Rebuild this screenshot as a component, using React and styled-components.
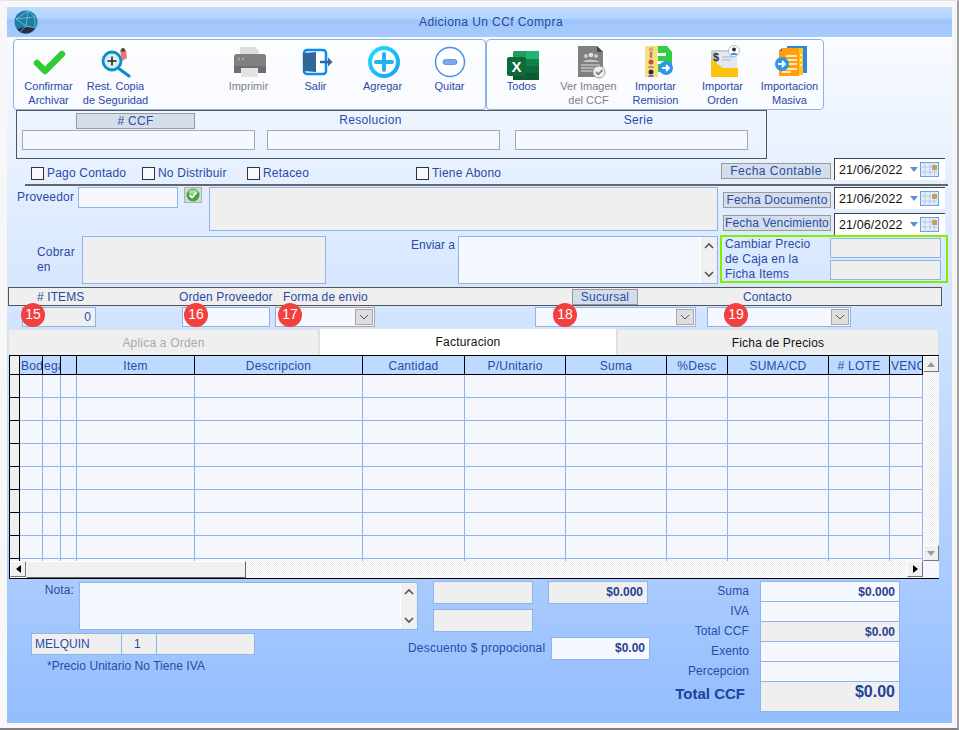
import React from 'react';
import styled, { createGlobalStyle } from 'styled-components';

const GlobalStyle = createGlobalStyle`
  html, body {
    margin: 0;
    padding: 0;
    background: #f7f7f7;
  }
  * {
    box-sizing: border-box;
  }
`;

const BLUE_LINE = '#8fb4ea';
const INK = '#2b4aa5';

const Frame = styled.div`
  width: 959px;
  height: 730px;
  padding: 7px 0 0 7px;
  border-top: 1px solid #e4e4e4;
  border-bottom: 2px solid #808080;
  border-right: 2px solid #a0a0a0;
  background: #f7f7f7;
  font-family: 'Liberation Sans', Arial, sans-serif;
  font-size: 12px;
  color: ${INK};
  overflow: hidden;
`;

const Form = styled.div`
  width: 945px;
  height: 716px;
  margin-top: -1px;
  background: linear-gradient(#f9fbff 30px, #d0e3ff 320px, #93bdfe);
`;

const TitleBar = styled.div`
  height: 30px;
  display: flex;
  align-items: center;
  padding-left: 7px;
  background: linear-gradient(#bedbff 0, #b5d5fe 11px, #9fc5fb 13px, #a6cafb);
`;

const Title = styled.div`
  flex: 1;
  padding-right: 8px;
  text-align: center;
  font-size: 12px;
  letter-spacing: 0.42px;
  color: #1f4aa0;
`;

const Toolbar = styled.div`
  display: flex;
  margin: 2px 0 0 6px;
`;

const ToolGroup = styled.div`
  display: flex;
  width: ${(p) => p.$width}px;
  height: 71px;
  padding-left: ${(p) => p.$pad}px;
  border: 1px solid #8fb2e6;
  border-radius: 4px;
  background: rgba(255, 255, 255, 0.55);
`;

const ToolItem = styled.div`
  width: 67px;
  padding-top: 5px;
  text-align: center;
  font-size: 11px;
  line-height: 14px;
  color: ${(p) => (p.$off ? '#808080' : INK)};
  white-space: nowrap;
  svg {
    display: block;
    margin: 0 auto -1px;
  }
`;

const ToolGap = styled.div`
  width: 66px;
`;

const CcfBox = styled.div`
  display: grid;
  grid-template-columns: 245px 248px 233px;
  width: 751px;
  height: 49px;
  margin-left: 9px;
  padding: 2px 0 0 5px;
  border: 1px solid #555;
`;

const CcfColumn = styled.div`
  display: flex;
  flex-direction: column;
  align-items: ${(p) => (p.$first ? 'flex-start' : 'stretch')};
`;

const CcfTitle = styled.div`
  height: 16px;
  line-height: 15px;
  text-align: center;
  letter-spacing: 0.3px;
  width: ${(p) => (p.$boxed ? '119px' : '233px')};
  margin-left: ${(p) => (p.$boxed ? '54px' : '0')};
  padding-left: ${(p) => p.$padLeft || 0}px;
  padding-right: ${(p) => p.$padRight || 0}px;
  ${(p) => p.$boxed && `
    background: #d4deea;
    border: 1px solid #9a9a9a;
  `}
`;

const PlainInput = styled.div`
  width: 233px;
  height: 20px;
  margin-top: 1px;
  background: #f5f8ff;
  border: 1px solid #a8a8a8;
`;

const CheckRow = styled.div`
  display: flex;
  align-items: flex-start;
  width: 923px;
  height: 27px;
  margin-left: 18px;
  padding-left: 6px;
  padding-right: 3px;
  border-bottom: 2px solid #666;
`;

const CheckItem = styled.label`
  display: flex;
  align-items: center;
  width: ${(p) => p.$width}px;
  margin-top: 7px;
  letter-spacing: 0.2px;
`;

const CheckBoxMark = styled.span`
  width: 13px;
  height: 13px;
  margin-right: 3px;
  border: 1px solid #333;
  background: #f7f9ff;
`;

const DateGroup = styled.div`
  display: flex;
  margin-left: auto;
  margin-top: -1px;
  align-items: flex-start;
`;

const FechaTag = styled.div`
  width: ${(p) => p.$width || 108}px;
  height: 16px;
  margin: ${(p) => p.$top || 5}px 3px 0 0;
  background: #d4deea;
  border: 1px solid #9a9a9a;
  line-height: 15px;
  text-align: center;
  letter-spacing: ${(p) => p.$track}px;
  white-space: nowrap;
`;

const DateField = styled.div`
  display: flex;
  align-items: center;
  width: 111px;
  height: 22px;
  padding-left: 4px;
  background: #fff;
  border-top: 1px solid #444;
  border-left: 1px solid #444;
  color: #111;
  font-size: 12.5px;
  letter-spacing: 0.1px;
  svg:last-child {
    margin-left: 2px;
  }
`;

const DateText = styled.span`
  width: 71px;
`;

const SupplierSection = styled.div`
  display: flex;
  height: 97px;
  margin-top: 1px;
`;

const SupplierLeft = styled.div`
  width: 713px;
`;

const SupplierRow = styled.div`
  display: flex;
  padding-left: ${(p) => p.$pad}px;
  margin-top: ${(p) => p.$top || 0}px;
  height: ${(p) => p.$height}px;
`;

const SideLabel = styled.div`
  width: ${(p) => p.$width}px;
  margin-left: ${(p) => p.$left || 0}px;
  padding-top: ${(p) => p.$top || 0}px;
  line-height: 15px;
  letter-spacing: ${(p) => (p.$tight ? 0 : 0.2)}px;
`;

const Field = styled.div`
  position: relative;
  flex: none;
  width: ${(p) => p.$width}px;
  height: ${(p) => p.$height || 20}px;
  margin-left: ${(p) => p.$left || 0}px;
  background: ${(p) => (p.$grey ? '#efefef' : '#f5f8ff')};
  border: 1px solid ${(p) => p.$line || BLUE_LINE};
  line-height: ${(p) => (p.$height || 20) - 2}px;
  text-align: ${(p) => p.$align || 'left'};
  font-weight: ${(p) => (p.$bold ? 'bold' : 'normal')};
  padding: 0 4px;
  color: ${(p) => (p.$bold ? '#2a3f8f' : INK)};
`;

const ScrollBarV = styled.div`
  position: absolute;
  right: 0;
  top: 0;
  bottom: 0;
  width: 17px;
  display: flex;
  flex-direction: column;
  justify-content: space-between;
  align-items: center;
  padding: 5px 0;
  background: #f0f0f0;
  border-left: 1px solid #fff;
`;

const OkButton = styled.div`
  width: 18px;
  height: 16px;
  margin-left: 6px;
  background: #d8d8d8;
  border: 1px solid #b0b0b0;
  svg {
    display: block;
    margin: 0 auto;
  }
`;

const SupplierRight = styled.div`
  width: 228px;
`;

const DateRow = styled.div`
  display: flex;
  height: 22px;
  margin-top: ${(p) => p.$top || 0}px;
  padding-left: 3px;
`;

const PriceBox = styled.div`
  display: flex;
  height: 48px;
  width: 228px;
  border: 2px solid #80f000;
  padding-left: 3px;
`;

const PriceText = styled.div`
  width: 105px;
  line-height: 15px;
  letter-spacing: 0.2px;
  white-space: nowrap;
`;

const PriceFields = styled.div`
  display: flex;
  flex-direction: column;
  gap: 2px;
  padding-top: 1px;
`;

const Strip = styled.div`
  display: flex;
  align-items: center;
  width: 934px;
  height: 19px;
  margin: 3px 0 0 1px;
  padding-left: 28px;
  background: #efefef;
  border: 1px solid #555;
`;

const StripLabel = styled.div`
  width: ${(p) => p.$width}px;
  flex: none;
  letter-spacing: 0.1px;
  white-space: nowrap;
`;

const StripButton = styled.div`
  width: 66px;
  height: 16px;
  margin-right: 105px;
  background: #d4deea;
  border: 1px solid #9a9a9a;
  line-height: 15px;
  text-align: center;
  letter-spacing: 0.2px;
`;

const FieldRow = styled.div`
  display: flex;
  margin: 1px 0 0 15px;
`;

const Badge = styled.div`
  position: absolute;
  top: -5px;
  left: ${(p) => p.$left}px;
  width: 24px;
  height: 24px;
  border-radius: 50%;
  background: #f2403f;
  color: #fff;
  font-size: 14px;
  line-height: 23px;
  text-align: center;
  z-index: 2;
`;

const ComboArrow = styled.div`
  position: absolute;
  top: 1px;
  right: 1px;
  width: 18px;
  height: 16px;
  display: flex;
  align-items: center;
  justify-content: center;
  background: #dedede;
  border: 1px solid #a8a8a8;
`;

const TabBar = styled.div`
  display: flex;
  align-items: flex-end;
  height: 26px;
  margin: 2px 0 0 1px;
`;

const Tab = styled.div`
  width: ${(p) => p.$width}px;
  height: ${(p) => (p.$active ? '27px' : '26px')};
  margin-top: ${(p) => (p.$active ? '-1px' : '0')};
  background: ${(p) => (p.$active ? '#fff' : '#efefef')};
  border-top: 1px solid #e2e2e2;
  border-left: 1px solid #e2e2e2;
  border-right: 1px solid #dcdcdc;
  color: ${(p) => (p.$off ? '#aaa' : '#111')};
  line-height: 26px;
  text-align: center;
  letter-spacing: 0.2px;
`;

const GridShell = styled.div`
  display: grid;
  grid-template-columns: 913px 16px;
  grid-template-rows: 205px 17px;
  width: 930px;
  margin-left: 2px;
  background: #f4f7fe;
  border-top: 1px solid #000;
  border-left: 1px solid #000;
  border-bottom: 1px solid #000;
`;

const TableClip = styled.div`
  overflow: hidden;
`;

const DataTable = styled.table`
  width: 913px;
  table-layout: fixed;
  border-collapse: separate;
  border-spacing: 0;
  font-size: 12px;
`;

const HeadCell = styled.th`
  height: 19px;
  padding: 1px ${(p) => (p.$left ? '1px' : '0')} 0;
  background: #bddaff;
  border-right: 1px solid #000;
  border-bottom: 1px solid #000;
  color: ${INK};
  font-weight: normal;
  letter-spacing: 0.25px;
  text-align: ${(p) => (p.$left ? 'left' : 'center')};
  white-space: nowrap;
  overflow: hidden;
`;

const CornerCell = styled.th`
  height: 19px;
  padding: 0;
  background: #efefef;
  border-right: 1px solid #000;
  border-bottom: 1px solid #000;
`;

const RowHead = styled.td`
  height: 23px;
  padding: 0;
  background: #efefef;
  border-right: 1px solid #000;
  border-bottom: 1px solid #000;
`;

const DataCell = styled.td`
  height: 23px;
  padding: 0;
  border-right: 1px solid ${BLUE_LINE};
  border-bottom: 1px solid ${BLUE_LINE};
`;

const Dither = styled.div`
  display: flex;
  flex-direction: ${(p) => (p.$vertical ? 'column' : 'row')};
  justify-content: space-between;
  background: repeating-conic-gradient(#ececec 0 25%, #fff 0 50%) 0 0 / 2px 2px;
`;

const ScrollButton = styled.div`
  flex: none;
  width: 16px;
  height: 16px;
  display: flex;
  align-items: center;
  justify-content: center;
  background: #f0f0f0;
  border-top: 1px solid #fff;
  border-left: 1px solid #fff;
  border-right: 1px solid #777;
  border-bottom: 1px solid #777;
`;

const ScrollThumb = styled.div`
  flex: none;
  width: 219px;
  height: 17px;
  margin-left: 1px;
  margin-right: auto;
  background: #f0f0f0;
  border-top: 1px solid #fff;
  border-right: 1px solid #666;
  border-bottom: 1px solid #666;
`;

const Footer = styled.div`
  display: flex;
  margin: 2px 0 0 24px;
`;

const FooterLeft = styled.div`
  width: 625px;
`;

const FooterTop = styled.div`
  display: flex;
  height: 52px;
`;

const NoteLabel = styled.div`
  width: 43px;
  padding-top: 2px;
  text-align: right;
  letter-spacing: 0.1px;
`;

const NoteField = styled(Field)`
  margin-top: 1px;
`;

const NoteColumn = styled.div`
  display: flex;
  flex-direction: column;
  gap: 5px;
  margin-left: 15px;
`;

const FooterBottom = styled.div`
  display: flex;
`;

const UserColumn = styled.div`
  width: 377px;
`;

const UserRow = styled.div`
  display: flex;
`;

const UserCell = styled.div`
  width: ${(p) => p.$width}px;
  height: 22px;
  padding-left: ${(p) => p.$pad || 3}px;
  background: #efefef;
  border: 1px solid ${BLUE_LINE};
  border-left-width: ${(p) => (p.$first ? '1px' : '0')};
  line-height: 20px;
`;

const UserNote = styled.div`
  margin: 4px 0 0 16px;
  letter-spacing: 0.05px;
`;

const DiscountLabel = styled.div`
  width: 143px;
  padding-top: 8px;
  letter-spacing: 0.2px;
  white-space: nowrap;
`;

const DiscountWrap = styled.div`
  padding-top: 4px;
`;

const Totals = styled.div`
  display: grid;
  grid-template-columns: 93px 139px;
  grid-auto-rows: 20px;
  column-gap: 11px;
  align-items: start;
`;

const TotalLabel = styled.div`
  text-align: right;
  line-height: 20px;
  letter-spacing: 0.1px;
  white-space: nowrap;
`;

const GrandLabel = styled.div`
  grid-row: span 2;
  padding: 4px 4px 0 0;
  text-align: right;
  font-size: 15px;
  font-weight: bold;
  color: #1e429c;
  white-space: nowrap;
`;

const TotalBox = styled(Field)`
  width: 140px;
  height: 21px;
  line-height: 20px;
`;

const GrandBox = styled(Field)`
  grid-row: span 2;
  width: 140px;
  height: 31px;
  font-size: 16px;
  line-height: 20px;
  color: #1e429c;
`;

const columns = [
  { title: 'Bod', width: 23, left: true },
  { title: 'ega', width: 18, left: true },
  { title: '', width: 16 },
  { title: 'Item', width: 118 },
  { title: 'Descripcion', width: 168 },
  { title: 'Cantidad', width: 102 },
  { title: 'P/Unitario', width: 101 },
  { title: 'Suma', width: 101 },
  { title: '%Desc', width: 61 },
  { title: 'SUMA/CD', width: 101 },
  { title: '# LOTE', width: 61 },
  { title: 'VENC', width: 33, left: true },
];

const Chevron = ({ up, thin }) => (
  <svg width="10" height="7" viewBox="0 0 10 7">
    <path
      d={up ? 'M1 6L5 2l4 4' : 'M1 1l4 4 4-4'}
      fill="none"
      stroke="#555"
      strokeWidth={thin ? 1 : 1.6}
    />
  </svg>
);

const Tri = ({ dir, color = '#000' }) => {
  const points = {
    up: '0,5 4,0 8,5',
    down: '0,0 8,0 4,5',
    left: '5,0 5,8 0,4',
    right: '0,0 0,8 5,4',
  };
  const box = dir === 'up' || dir === 'down' ? [8, 5] : [5, 8];
  return (
    <svg width={box[0]} height={box[1]} viewBox={`0 0 ${box[0]} ${box[1]}`}>
      <polygon points={points[dir]} fill={color} />
    </svg>
  );
};

const Globe = () => (
  <svg width="24" height="24" viewBox="0 0 24 24">
    <circle cx="12" cy="12" r="11.5" fill="#1c7fa8" />
    <path d="M3 19c5-2 13-3 18-1-2 3-5 5.500-9 5.500S5 22 3 19z" fill="#26324a" />
    <g fill="none" stroke="#9fd2e8" strokeWidth="0.6">
      <path d="M2 9L14 1M2 9l10 7 9 2M14 1l-2 15-6 6M2 9l19-2M14 1l7 6 0 11" />
    </g>
  </svg>
);

const CheckIcon = () => (
  <svg width="40" height="35" viewBox="0 0 40 35">
    <path
      d="M8 18l8 8L33 9"
      fill="none"
      stroke="#33cc33"
      strokeWidth="6.500"
      strokeLinecap="round"
      strokeLinejoin="round"
    />
  </svg>
);

const SearchIcon = () => (
  <svg width="40" height="35" viewBox="0 0 40 35">
    <path d="M24 5h6l1 8-5 3z" fill="#e87878" />
    <circle cx="27" cy="5" r="2" fill="#5a3a3a" />
    <path d="M22 23l11 8" stroke="#0b8ec7" strokeWidth="3.200" strokeLinecap="round" />
    <circle cx="16" cy="16" r="9" fill="#d9edf3" stroke="#0b8ec7" strokeWidth="2.800" />
    <path d="M11.500 16h9M16 11.500v9" stroke="#222" strokeWidth="1.500" />
  </svg>
);

const PrinterIcon = () => (
  <svg width="40" height="35" viewBox="0 0 40 35">
    <path d="M11 2h15l4 4v6H11z" fill="#dcdcdc" />
    <rect x="5" y="9" width="32" height="19" rx="2.500" fill="#808080" />
    <rect x="5" y="21" width="32" height="7" fill="#6e6e6e" />
    <circle cx="10" cy="14" r="1.200" fill="#a8a8a8" />
    <circle cx="14" cy="14" r="1.200" fill="#a8a8a8" />
    <rect x="12" y="23" width="17" height="9" fill="#e4e4e4" />
  </svg>
);

const ExitIcon = () => (
  <svg width="40" height="35" viewBox="0 0 40 35">
    <rect x="8" y="5" width="22" height="24" rx="3" fill="#fff" stroke="#0b8cf2" strokeWidth="2.500" />
    <path d="M7 8l13-1v20l-13-1z" fill="#336699" />
    <path d="M24 17h10" stroke="#336699" strokeWidth="2.500" />
    <path d="M32 12.500l4.500 4.500-4.500 4.500z" fill="#336699" />
  </svg>
);

const AddIcon = () => (
  <svg width="40" height="35" viewBox="0 0 40 35">
    <defs>
      <linearGradient id="addRing" x1="0" y1="0" x2="1" y2="1">
        <stop offset="0" stopColor="#20e0ff" />
        <stop offset="1" stopColor="#1c9cf2" />
      </linearGradient>
    </defs>
    <circle cx="21" cy="17" r="14" fill="#fff" stroke="url(#addRing)" strokeWidth="4" />
    <path d="M21 9v16M13 17h16" stroke="#22b4f0" strokeWidth="4" strokeLinecap="round" />
  </svg>
);

const RemoveIcon = () => (
  <svg width="40" height="35" viewBox="0 0 40 35">
    <circle cx="20" cy="17" r="14.500" fill="#fff" stroke="#4a90f0" strokeWidth="1.500" />
    <rect x="13" y="14.500" width="14" height="5" rx="2.500" fill="#7fa9ee" stroke="#4a86e8" strokeWidth="0.800" />
  </svg>
);

const ExcelIcon = () => (
  <svg width="40" height="35" viewBox="0 0 40 35">
    <rect x="11" y="6" width="26" height="29" rx="1.500" fill="#1f9d5f" />
    <rect x="24" y="6" width="13" height="8" fill="#20b573" />
    <rect x="24" y="14" width="13" height="7" fill="#12804a" />
    <rect x="24" y="21" width="13" height="7" fill="#0f6b3d" />
    <rect x="11" y="28" width="26" height="7" fill="#0c5a33" />
    <rect x="5" y="12" width="19" height="19" rx="2" fill="#0d6a3a" />
    <text x="14.500" y="27" fontFamily="Liberation Sans" fontSize="15" fontWeight="bold" fill="#fff" textAnchor="middle">X</text>
  </svg>
);

const DocIcon = () => (
  <svg width="40" height="35" viewBox="0 0 40 35">
    <path d="M9 1h19l6 6v25H9z" fill="#808080" />
    <path d="M28 1l6 6h-6z" fill="#444" />
    <circle cx="17" cy="11" r="2" fill="#c8c8c8" />
    <circle cx="22" cy="10" r="2.300" fill="#e4e4e4" />
    <circle cx="27" cy="11" r="2" fill="#c8c8c8" />
    <path d="M14 17c1-3 14-3 16 0z" fill="#c8c8c8" />
    <path d="M12 20h19M12 23h17M12 26h13" stroke="#e0e0e0" strokeWidth="1.200" />
    <circle cx="30" cy="27" r="6" fill="#f0f0f0" stroke="#9a9a9a" />
    <path d="M27 27l2.300 2.300L33.500 25" fill="none" stroke="#808080" strokeWidth="1.800" />
  </svg>
);

const ArrowBadge = ({ cx, cy }) => (
  <g>
    <circle cx={cx} cy={cy} r="7" fill="#2f96f0" />
    <path d={`M${cx - 4} ${cy}h7M${cx} ${cy - 3}l3 3-3 3`} fill="none" stroke="#fff" strokeWidth="1.800" />
  </g>
);

const RemisionIcon = () => (
  <svg width="40" height="35" viewBox="0 0 40 35">
    <path d="M21 1h10l5 6v20H21z" fill="#33cc44" />
    <rect x="9" y="1" width="13" height="31" fill="#f2e27a" />
    <path d="M21 8h9v3h-9zM21 16h7v3h-7z" fill="#fff" />
    <circle cx="15" cy="4.500" r="2.300" fill="#d9a58a" />
    <path d="M15 7v6" stroke="#c87070" strokeWidth="2.500" />
    <circle cx="15" cy="17" r="2.500" fill="#c9503a" />
    <path d="M12 23c0-3 6-3 6 0z" fill="#d88060" />
    <circle cx="15" cy="27" r="2.500" fill="#3a2a40" />
    <path d="M12 32c0-3 6-3 6 0z" fill="#8a60c0" />
    <ArrowBadge cx={30} cy={23} />
  </svg>
);

const OrdenIcon = () => (
  <svg width="40" height="35" viewBox="0 0 40 35">
    <rect x="8" y="5" width="26" height="18" fill="#c7ced9" />
    <rect x="14" y="7" width="20" height="16" fill="#e3e9f2" />
    <path d="M19 12h12M19 15h9" stroke="#a9b4c4" strokeWidth="1.200" />
    <path d="M8 14l12 9h15v9H8z" fill="#ffc20e" />
    <text x="13" y="16" fontFamily="Liberation Sans" fontSize="11" fontWeight="bold" fill="#333" textAnchor="middle">$</text>
    <circle cx="31" cy="6" r="5.500" fill="#fff" stroke="#bbb" />
    <circle cx="31" cy="4.500" r="2" fill="#3a2f2a" />
    <path d="M27.500 10c0-3 7-3 7 0z" fill="#2f96f0" />
  </svg>
);

const MasivaIcon = () => (
  <svg width="40" height="35" viewBox="0 0 40 35">
    <rect x="17" y="1" width="20" height="27" fill="#2f86e0" />
    <rect x="12" y="3" width="21" height="27" fill="#ffc21a" />
    <path d="M9 6l4-3h16v28H9z" fill="#ff9f0a" />
    <path d="M9 6l3-3v3z" fill="#7e57c2" />
    <path d="M16 11h11M16 15h11M16 19h11M12 24h15M12 27h9" stroke="#fff" strokeWidth="1.300" />
    <path d="M30 10h2M30 15h2M30 20h2" stroke="#fff" strokeWidth="1.300" />
    <ArrowBadge cx={12} cy={19} />
  </svg>
);

const OkIcon = () => (
  <svg width="16" height="14" viewBox="0 0 16 14">
    <circle cx="8" cy="7" r="6.500" fill="#3fa83f" />
    <ellipse cx="8" cy="4" rx="4.500" ry="2.500" fill="#9edc9e" />
    <path d="M4.500 7l2.500 2.500L11.500 4.500" fill="none" stroke="#fff" strokeWidth="1.800" />
  </svg>
);

const CalendarIcon = () => (
  <svg width="20" height="16" viewBox="0 0 20 16">
    <rect x="0.500" y="0.500" width="18" height="14" fill="#e6eefb" stroke="#6a9be0" />
    <path d="M0 5h19M0 10h19M5 0v15M10 0v15M14.500 0v15" stroke="#a9c4ec" strokeWidth="0.800" />
    <rect x="12" y="3" width="5" height="5" fill="#c4a25e" />
  </svg>
);

const DateBox = () => (
  <DateField>
    <DateText>21/06/2022</DateText>
    <Tri dir="down" color="#5b8fd8" />
    <CalendarIcon />
  </DateField>
);

const Check = ({ width, children }) => (
  <CheckItem $width={width}>
    <CheckBoxMark />
    {children}
  </CheckItem>
);

const tools = [
  [<CheckIcon />, 'Confirmar', 'Archivar'],
  [<SearchIcon />, 'Rest. Copia', 'de Seguridad'],
  null,
  [<PrinterIcon />, 'Imprimir', null, true],
  [<ExitIcon />, 'Salir'],
  [<AddIcon />, 'Agregar'],
  [<RemoveIcon />, 'Quitar'],
];

const tools2 = [
  [<ExcelIcon />, 'Todos'],
  [<DocIcon />, 'Ver Imagen', 'del CCF', true],
  [<RemisionIcon />, 'Importar', 'Remision'],
  [<OrdenIcon />, 'Importar', 'Orden'],
  [<MasivaIcon />, 'Importacion', 'Masiva'],
];

const renderTool = (tool, i) =>
  tool ? (
    <ToolItem key={i} $off={tool[3]}>
      {tool[0]}
      <div>{tool[1]}</div>
      {tool[2] && <div>{tool[2]}</div>}
    </ToolItem>
  ) : (
    <ToolGap key={i} />
  );

export default function App() {
  return (
    <Frame>
      <GlobalStyle />
      <Form>
        <TitleBar>
          <Globe />
          <Title>Adiciona Un CCf Compra</Title>
        </TitleBar>

        <Toolbar>
          <ToolGroup $width={473} $pad={1}>
            {tools.map(renderTool)}
          </ToolGroup>
          <ToolGroup $width={338} $pad={1}>
            {tools2.map(renderTool)}
          </ToolGroup>
        </Toolbar>

        <CcfBox>
          <CcfColumn $first>
            <CcfTitle $boxed># CCF</CcfTitle>
            <PlainInput />
          </CcfColumn>
          <CcfColumn>
            <CcfTitle $padRight={26}>Resolucion</CcfTitle>
            <PlainInput />
          </CcfColumn>
          <CcfColumn>
            <CcfTitle $padLeft={14}>Serie</CcfTitle>
            <PlainInput />
          </CcfColumn>
        </CcfBox>

        <CheckRow>
          <Check width={111}>Pago Contado</Check>
          <Check width={105}>No Distribuir</Check>
          <Check width={169}>Retaceo</Check>
          <Check width={150}>Tiene Abono</Check>
          <DateGroup>
            <FechaTag $width={110} $track={0.5}>Fecha Contable</FechaTag>
            <DateBox />
          </DateGroup>
        </CheckRow>

        <SupplierSection>
          <SupplierLeft>
            <SupplierRow $pad={10} $height={44}>
              <SideLabel $width={61} $top={3}>Proveedor</SideLabel>
              <Field $width={100} $height={21} />
              <OkButton><OkIcon /></OkButton>
              <Field $width={509} $height={44} $left={7} $grey />
            </SupplierRow>
            <SupplierRow $pad={30} $height={48} $top={5}>
              <SideLabel $width={45} $top={9}>Cobrar en</SideLabel>
              <Field $width={244} $height={48} $grey />
              <SideLabel $width={47} $left={85} $top={2} $tight>Enviar a</SideLabel>
              <Field $width={260} $height={48}>
                <ScrollBarV>
                  <Chevron up />
                  <Chevron />
                </ScrollBarV>
              </Field>
            </SupplierRow>
          </SupplierLeft>
          <SupplierRight>
            <DateRow>
              <FechaTag $track={0.2}>Fecha Documento</FechaTag>
              <DateBox />
            </DateRow>
            <DateRow $top={4}>
              <FechaTag $top={2} $track={0.1}>Fecha Vencimiento</FechaTag>
              <DateBox />
            </DateRow>
            <PriceBox>
              <PriceText>
                Cambiar Precio
                <br />
                de Caja en la
                <br />
                Ficha Items
              </PriceText>
              <PriceFields>
                <Field $width={111} $height={20} $grey />
                <Field $width={111} $height={20} $grey />
              </PriceFields>
            </PriceBox>
          </SupplierRight>
        </SupplierSection>

        <Strip>
          <StripLabel $width={142}># ITEMS</StripLabel>
          <StripLabel $width={104}>Orden Proveedor</StripLabel>
          <StripLabel $width={289}>Forma de envio</StripLabel>
          <StripButton>Sucursal</StripButton>
          <StripLabel $width={60}>Contacto</StripLabel>
        </Strip>

        <FieldRow>
          <Field $width={74} $align="right" $grey>
            0
            <Badge $left={-2}>15</Badge>
          </Field>
          <Field $width={88} $left={86}>
            <Badge $left={1}>16</Badge>
          </Field>
          <Field $width={100} $left={5} $line="#a8a8a8">
            <Badge $left={2}>17</Badge>
            <ComboArrow><Chevron thin /></ComboArrow>
          </Field>
          <Field $width={161} $left={160}>
            <Badge $left={17}>18</Badge>
            <ComboArrow><Chevron thin /></ComboArrow>
          </Field>
          <Field $width={144} $left={11}>
            <Badge $left={16}>19</Badge>
            <ComboArrow><Chevron thin /></ComboArrow>
          </Field>
        </FieldRow>

        <TabBar>
          <Tab $width={311} $off>Aplica a Orden</Tab>
          <Tab $width={298} $active>Facturacion</Tab>
          <Tab $width={322}>Ficha de Precios</Tab>
        </TabBar>

        <GridShell>
          <TableClip>
            <DataTable>
              <colgroup>
                <col style={{ width: 10 }} />
                {columns.map((c, i) => (
                  <col key={i} style={{ width: c.width }} />
                ))}
              </colgroup>
              <thead>
                <tr>
                  <CornerCell />
                  {columns.map((c, i) => (
                    <HeadCell key={i} $left={c.left}>{c.title}</HeadCell>
                  ))}
                </tr>
              </thead>
              <tbody>
                {Array.from({ length: 9 }).map((_, r) => (
                  <tr key={r}>
                    <RowHead />
                    {columns.map((c, i) => (
                      <DataCell key={i} />
                    ))}
                  </tr>
                ))}
              </tbody>
            </DataTable>
          </TableClip>
          <Dither $vertical>
            <ScrollButton><Tri dir="up" color="#999" /></ScrollButton>
            <ScrollButton><Tri dir="down" color="#999" /></ScrollButton>
          </Dither>
          <Dither>
            <ScrollButton><Tri dir="left" /></ScrollButton>
            <ScrollThumb />
            <ScrollButton><Tri dir="right" /></ScrollButton>
          </Dither>
          <div />
        </GridShell>

        <Footer>
          <FooterLeft>
            <FooterTop>
              <NoteLabel>Nota:</NoteLabel>
              <NoteField $width={339} $height={48} $left={5}>
                <ScrollBarV>
                  <Chevron up />
                  <Chevron />
                </ScrollBarV>
              </NoteField>
              <NoteColumn>
                <Field $width={100} $height={23} $grey />
                <Field $width={100} $height={23} $grey />
              </NoteColumn>
              <Field $width={100} $height={23} $left={15} $align="right" $grey $bold>
                $0.000
              </Field>
            </FooterTop>
            <FooterBottom>
              <UserColumn>
                <UserRow>
                  <UserCell $width={91} $first>MELQUIN</UserCell>
                  <UserCell $width={35} $pad={12}>1</UserCell>
                  <UserCell $width={98} />
                </UserRow>
                <UserNote>*Precio Unitario No Tiene IVA</UserNote>
              </UserColumn>
              <DiscountLabel>Descuento $ propocional</DiscountLabel>
              <DiscountWrap>
                <Field $width={99} $height={23} $align="right" $bold>$0.00</Field>
              </DiscountWrap>
            </FooterBottom>
          </FooterLeft>
          <Totals>
            <TotalLabel>Suma</TotalLabel>
            <TotalBox $align="right" $bold>$0.000</TotalBox>
            <TotalLabel>IVA</TotalLabel>
            <TotalBox />
            <TotalLabel>Total CCF</TotalLabel>
            <TotalBox $align="right" $bold $grey>$0.00</TotalBox>
            <TotalLabel>Exento</TotalLabel>
            <TotalBox />
            <TotalLabel>Percepcion</TotalLabel>
            <TotalBox />
            <GrandLabel>Total CCF</GrandLabel>
            <GrandBox $align="right" $bold $grey>$0.00</GrandBox>
          </Totals>
        </Footer>
      </Form>
    </Frame>
  );
}
